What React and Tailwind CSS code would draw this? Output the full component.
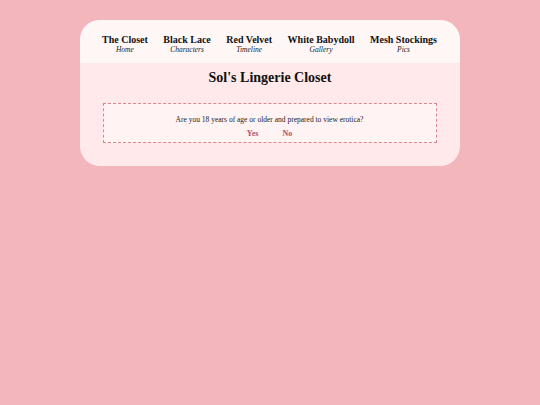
export default function App() {
  const nav = [
    ["The Closet", "Home"],
    ["Black Lace", "Characters"],
    ["Red Velvet", "Timeline"],
    ["White Babydoll", "Gallery"],
    ["Mesh Stockings", "Pics"],
  ];
  return (
    <div className="w-[540px] h-[405px] bg-[#f3b6bd] pt-[20px]" style={{ fontFamily: '"Liberation Serif", "Times New Roman", serif' }}>
      <div className="ml-[80px] w-[380px] h-[146px] rounded-[20px] overflow-hidden bg-[#ffe9ea] flex flex-col">
        <div className="h-[43px] bg-[#fff6f6] flex items-center justify-between pl-[22px] pr-[23px] pt-[6px]">
          {nav.map(([t, s]) => (
            <div key={t} className="flex flex-col items-center leading-none">
              <span className="text-[10px] font-bold text-[#111] leading-[11px]">{t}</span>
              <span className="text-[7.5px] italic text-[#222] leading-[10px]">{s}</span>
            </div>
          ))}
        </div>
        <div className="flex flex-col items-center">
          <h1 className="mt-[6px] text-[14px] font-bold text-[#111] leading-[18px]">Sol's Lingerie Closet</h1>
          <div className="mt-[16px] w-[334px] h-[40px] ml-[-1px] border-[1.5px] border-dashed border-[#e0848a] bg-[#fff3f3] flex flex-col items-center">
            <p className="mt-[11px] text-[7.5px] text-[#222] leading-[9px]">Are you 18 years of age or older and prepared to view erotica?</p>
            <div className="mt-[5px] flex gap-[24px] text-[8px] font-bold text-[#b5506a] leading-[9px]">
              <span>Yes</span>
              <span>No</span>
            </div>
          </div>
        </div>
      </div>
    </div>
  );
}
